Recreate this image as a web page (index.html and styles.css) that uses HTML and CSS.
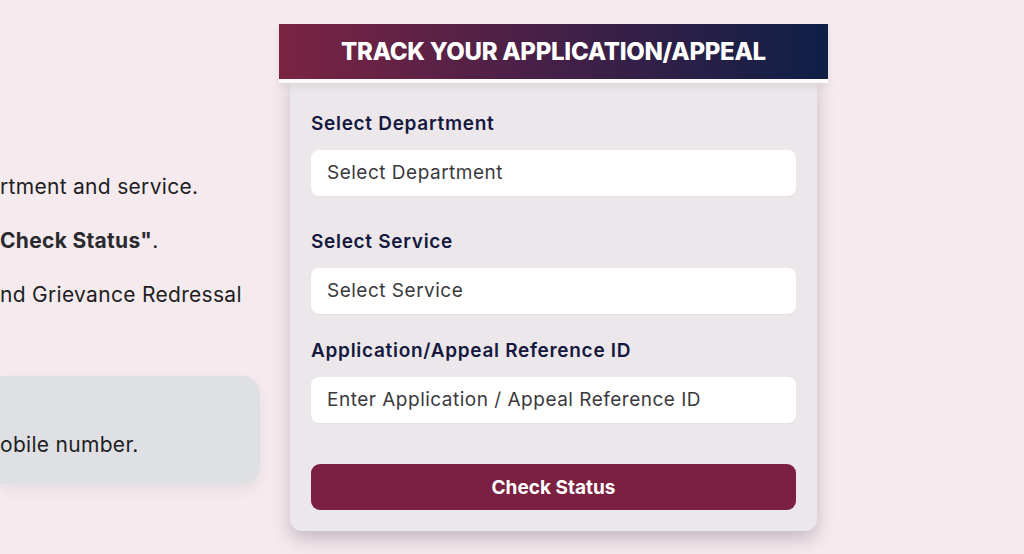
FILE: index.html
```html
<!DOCTYPE html>
<html lang="en">
<head>
<meta charset="utf-8">
<title>Track Application</title>
<link rel="stylesheet" href="styles.css">
</head>
<body>
<main class="page">
  <section class="info">
    <ul class="steps">
      <li>rtment and service.</li>
      <li><strong>Check Status"</strong>.</li>
      <li>nd Grievance Redressal</li>
    </ul>
    <div class="note">
      <p>obile number.</p>
    </div>
  </section>
  <section class="tracker">
    <h2 class="tracker-title">TRACK YOUR APPLICATION/APPEAL</h2>
    <form class="tracker-card">
      <label class="field-label">Select Department</label>
      <div class="field">Select Department</div>
      <label class="field-label">Select Service</label>
      <div class="field">Select Service</div>
      <label class="field-label">Application/Appeal Reference ID</label>
      <div class="field">Enter Application / Appeal Reference ID</div>
      <button type="button" class="btn">Check Status</button>
    </form>
  </section>
</main>
</body>
</html>
```
FILE: styles.css
```css
* { box-sizing: border-box; }
html, body { margin: 0; padding: 0; }
body {
  background: #f5ebef;
  font-family: Inter, "Noto Sans", sans-serif;
  width: 1024px;
  height: 554px;
  overflow: hidden;
}
.page {
  display: flex;
  align-items: flex-start;
  padding-top: 24px;
}
.info {
  width: 260px;
  flex: none;
  margin-right: 19px;
  padding-top: 151px;
  color: #1e1e22;
}
.steps {
  list-style: none;
  margin: 0;
  padding: 0;
  font-size: 21px;
  letter-spacing: 0.3px;
  line-height: 24px;
  white-space: nowrap;
}
.steps li { margin-bottom: 30px; }
.steps li strong { font-weight: 700; color: #2a2a2e; }
.note {
  margin-top: 69px;
  height: 108px;
  background: #dfe0e4;
  border-radius: 0 18px 18px 0;
  box-shadow: 0 6px 16px rgba(0,0,0,0.06);
  padding-top: 57px;
  font-size: 21px;
  letter-spacing: 0.3px;
  white-space: nowrap;
}
.note p { margin: 0; line-height: 24px; }
.tracker {
  width: 549px;
  flex: none;
}
.tracker-title {
  position: relative;
  z-index: 2;
  margin: 0;
  height: 59px;
  border-bottom: 4px solid #fdfbfc;
  background: linear-gradient(90deg, #7b2442 0%, #4a2048 45%, #0e1f46 100%);
  color: #fff;
  font-size: 24px;
  font-weight: 800;
  letter-spacing: -0.3px;
  text-align: center;
  line-height: 55px;
  box-shadow: 0 4px 8px rgba(0,0,0,0.08);
}
.tracker-card {
  margin: -4px 11px 0;
  padding: 34px 21px 21px;
  background: #ece7ea;
  border-radius: 0 0 12px 12px;
  box-shadow: 0 8px 18px rgba(60,40,60,0.25);
  display: flex;
  flex-direction: column;
}
.field-label {
  font-size: 19px;
  font-weight: 600;
  letter-spacing: 0.7px;
  color: #15193f;
  line-height: 22px;
  margin-bottom: 15px;
}
.field {
  height: 46px;
  background: #fff;
  border-radius: 8px;
  padding: 0 16px;
  font-size: 19px;
  letter-spacing: 0.5px;
  line-height: 46px;
  color: #3a3a3e;
  margin-bottom: 35px;
  box-shadow: 0 1px 2px rgba(0,0,0,0.04);
}
.field:nth-of-type(2) { margin-bottom: 26px; }
.field:nth-of-type(3) { margin-bottom: 41px; }
.btn {
  height: 46px;
  border: none;
  border-radius: 9px;
  background: #7b2040;
  color: #fff;
  font-family: inherit;
  font-size: 19px;
  font-weight: 700;
}
```
